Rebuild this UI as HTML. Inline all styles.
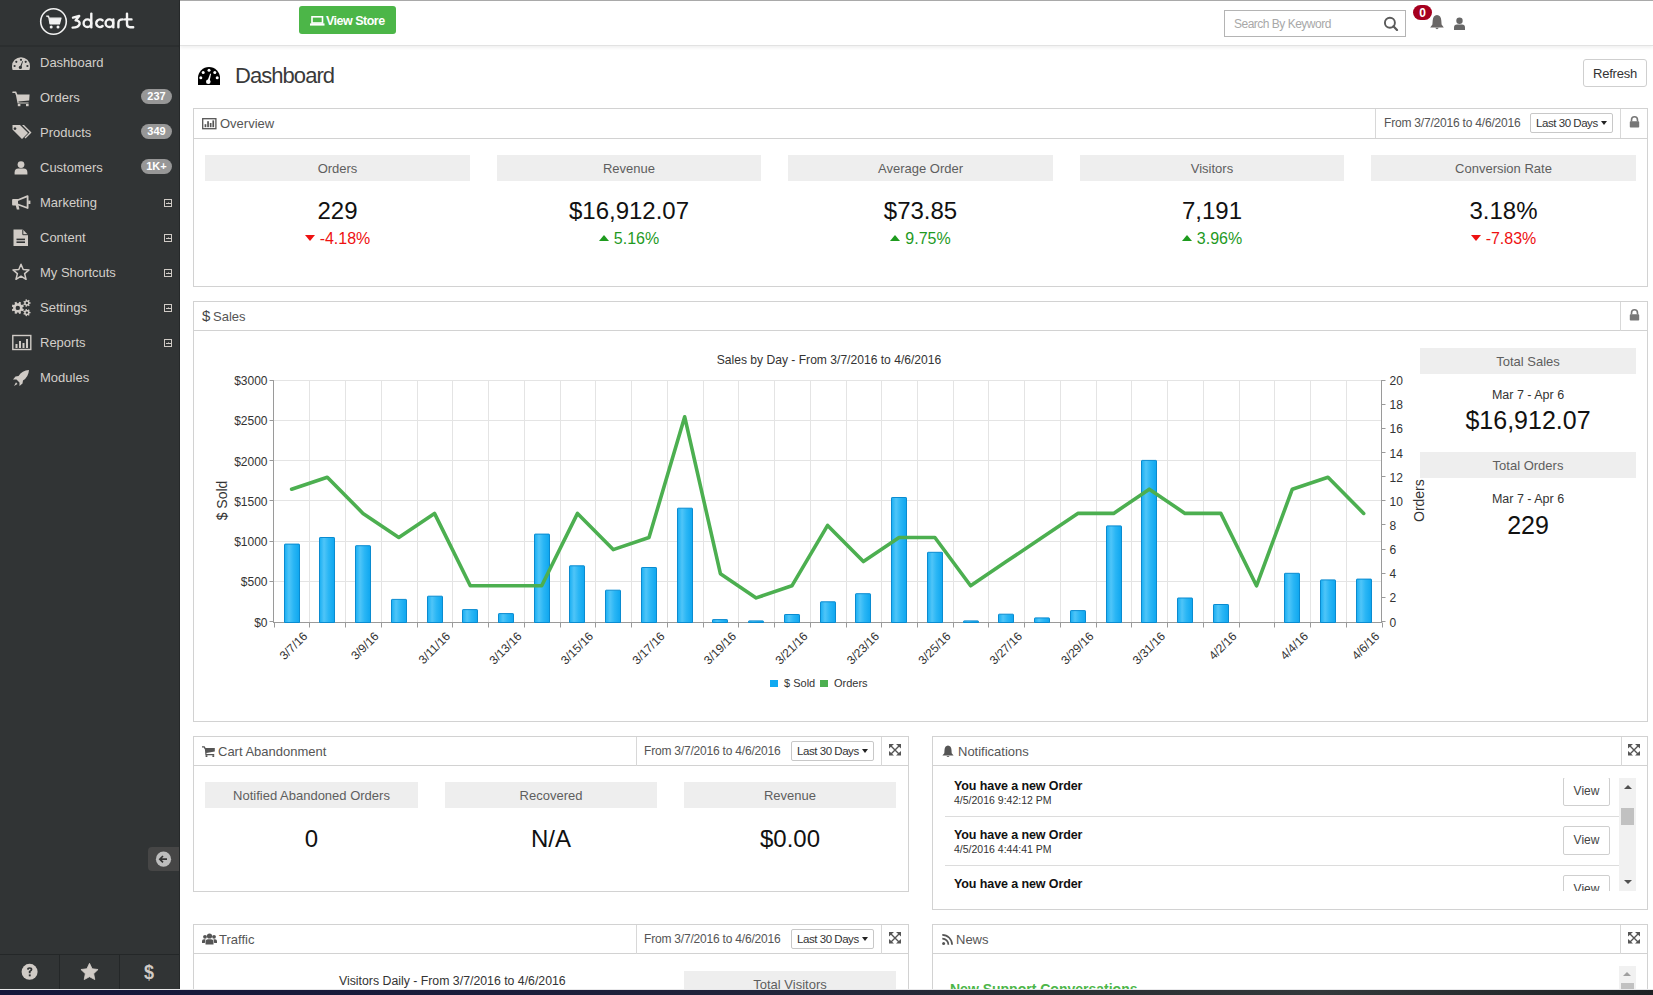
<!DOCTYPE html>
<html><head><meta charset="utf-8">
<style>
*{box-sizing:border-box;margin:0;padding:0}
html,body{width:1653px;height:995px;overflow:hidden;background:#fff;font-family:"Liberation Sans",sans-serif;}
#root{position:relative;width:1653px;height:995px;overflow:hidden;background:#fff}
.a{position:absolute;white-space:nowrap}
#sb{position:absolute;left:0;top:0;width:180px;height:989px;background:#313435;border-right:1px solid #26292a}
.mi{position:absolute;left:40px;font-size:13px;color:#d3cfca;line-height:16px}
.ic{position:absolute;left:12px;width:20px;height:18px}
.badge{position:absolute;left:141px;width:31px;height:15px;border-radius:8px;background:#979797;color:#fff;font-weight:bold;font-size:11px;line-height:15px;text-align:center}
.plus{position:absolute;left:164px;width:8px;height:8px;border:1px solid #cfcac5}
.plus:after{content:"";position:absolute;left:1px;top:2.5px;width:5px;height:1px;background:#cfcac5}
.plus:before{content:"";position:absolute;left:2.5px;top:2px;width:1px;height:2px;background:#8a8784}
#hdr{position:absolute;left:180px;top:1px;width:1473px;height:45px;background:#fff;border-bottom:1px solid #e2e2e2;box-shadow:0 2px 3px rgba(0,0,0,0.06)}
.panel{position:absolute;border:1px solid #d2d2d2;background:#fff}
.ph{position:absolute;left:0;top:0;right:0;height:29px;border-bottom:1px solid #d2d2d2}
.pt{position:absolute;font-size:13px;color:#555;line-height:16px}
.bx{position:absolute;background:#eeeeee;height:26px;font-size:13px;color:#5e5e5e;text-align:center;line-height:28px}
.val{position:absolute;text-align:center;font-size:24px;color:#111;line-height:28px}
.chg{position:absolute;text-align:center;font-size:16px;line-height:20px}
.red{color:#ee1111}.grn{color:#1f9a1f}
.dd{position:absolute;border:1px solid #c8c8c8;border-radius:2px;font-size:11.5px;color:#333;line-height:18px;padding-left:5px;letter-spacing:-0.45px}
.dd:after{content:"";position:absolute;right:5px;top:7px;border-left:3px solid transparent;border-right:3px solid transparent;border-top:4px solid #222;}
.sep{position:absolute;top:0;width:1px;height:29px;background:#d8d8d8}
.tri{display:inline-block;width:0;height:0;border-left:5.5px solid transparent;border-right:5.5px solid transparent;vertical-align:middle;margin-right:5px;position:relative;top:-2px}
.tri.dn{border-top:6px solid #ee1111}.tri.up{border-bottom:6px solid #1e9b1e}
.nt{position:absolute;left:21px;font-size:12.5px;font-weight:bold;color:#111;line-height:17px;letter-spacing:-0.1px}
.nd{position:absolute;left:21px;font-size:10.5px;color:#333;line-height:15px}
.vb{position:absolute;left:630px;width:47px;height:29px;border:1px solid #cfcfcf;border-radius:2px;font-size:12px;color:#444;line-height:27px;text-align:center}
.rng{position:absolute;font-size:12px;color:#555;line-height:16px;letter-spacing:-0.2px}
</style></head><body><div id="root">
<!-- top gray line -->
<div class="a" style="left:0;top:0;width:1653px;height:1px;background:#a9a9a9"></div>
<!-- sidebar -->
<div id="sb">

 <div class="a" style="left:0;top:45px;width:179px;height:2px;background:#2b2e2f"></div>
 <!-- logo -->
 <svg class="a" style="left:39px;top:7px" width="30" height="30" viewBox="0 0 30 30">
  <circle cx="14.5" cy="14.5" r="12.8" fill="none" stroke="#f2f2f2" stroke-width="1.6"/>
  <path d="M7.2 9.2 L9.6 9.2 L11 17 L20.4 17 L22 11.2 L10.2 11.2" fill="#f2f2f2" stroke="#f2f2f2" stroke-width="1.2" stroke-linejoin="round"/>
  <circle cx="12.2" cy="20" r="1.5" fill="#f2f2f2"/><circle cx="19" cy="20" r="1.5" fill="#f2f2f2"/>
 </svg>
 <svg class="a" style="left:0;top:0" width="180" height="44" viewBox="0 0 180 44"><g fill="none" stroke="#f4f4f4" stroke-width="2.4" stroke-linecap="round" stroke-linejoin="round">
  <path d="M73 17.6 L79.2 16 L75.6 20.4 Q80.2 21 79.6 24.2 Q78.6 27.6 72.6 27.6"/>
  <circle cx="87.4" cy="23.2" r="3.8"/><path d="M91.3 13.6 L91.3 27.2"/>
  <path d="M102.6 20.4 A3.8 3.8 0 1 0 102.6 26"/>
  <circle cx="109.4" cy="23.2" r="3.8"/><path d="M113.3 19.4 L113.3 27.2"/>
  <path d="M118.4 27.2 L118.4 23 Q118.4 19.4 122.8 19.4"/>
  <path d="M127 13.6 L127 24 Q127 27.2 130 27.2 L133.2 27.2 M125 19.4 L131.5 19.4"/>
 </g></svg>
 <!-- menu -->
 <svg class="ic" style="top:55px;left:11px" viewBox="0 0 20 18"><path d="M10 2.2 A9 9 0 0 0 1 11.2 Q1 13.4 1.6 15 L18.4 15 Q19 13.4 19 11.2 A9 9 0 0 0 10 2.2 Z" fill="#d0cbc6"/><g fill="#303334"><circle cx="10" cy="4.8" r="1.1"/><circle cx="5.3" cy="6.8" r="1.1"/><circle cx="14.7" cy="6.8" r="1.1"/><circle cx="3.6" cy="11" r="1.1"/><circle cx="16.4" cy="11" r="1.1"/><circle cx="9.4" cy="12.4" r="1.6"/><path d="M8.8 12.2 L11.4 6 L12 6.2 L10.2 12.6 Z"/></g></svg>
 <div class="mi" style="top:55px">Dashboard</div>
 <svg class="ic" style="top:91px" viewBox="0 0 20 18"><path d="M1 1.3 L3.6 1.3 L4.6 3.6" fill="none" stroke="#d0cbc6" stroke-width="1.6" stroke-linecap="round"/><path d="M3.8 3.4 L17.6 3.4 L17.2 9.6 L6.4 10.6 L6.6 11.6 L16.6 11.6 L16.6 12.6 L5.6 12.6 Z" fill="#d0cbc6"/><rect x="5.8" y="13" width="2.6" height="2.2" fill="#d0cbc6"/><rect x="14" y="13" width="2.6" height="2.2" fill="#d0cbc6"/></svg>
 <div class="mi" style="top:90px">Orders</div>
 <div class="badge" style="top:89px">237</div>
 <svg class="ic" style="top:124px" viewBox="0 0 20 18"><path d="M0.5 1 L8 1 L16 9 L10 15 L0.5 5.5 Z M3 3.2 A1.4 1.4 0 1 0 3.01 3.2 Z" fill="#d0cbc6" fill-rule="evenodd"/><path d="M10 1 L12 1 L19.5 8.5 L13.5 14.5 L12.5 13.5 L17.5 8.5 Z" fill="#d0cbc6"/></svg>
 <div class="mi" style="top:125px">Products</div>
 <div class="badge" style="top:124px">349</div>
 <svg class="ic" style="top:159px" viewBox="0 0 20 18"><circle cx="9" cy="5.6" r="3.4" fill="#d0cbc6"/><path d="M2.6 15.6 L2.6 13.6 Q2.6 9.8 6.4 9.6 L11.6 9.6 Q15.4 9.8 15.4 13.6 L15.4 15.6 Z" fill="#d0cbc6"/></svg>
 <div class="mi" style="top:160px">Customers</div>
 <div class="badge" style="top:159px">1K+</div>
 <svg class="ic" style="top:194px" viewBox="0 0 20 18"><path d="M1 6 L6 6 L15.6 2.2 L15.6 14 L6 10.5 L1 10.5 Z" fill="none" stroke="#d0cbc6" stroke-width="1.8" stroke-linejoin="round"/><path d="M1 6 L6 6 L6 10.5 L1 10.5 Z" fill="#d0cbc6"/><path d="M3.6 10.5 L6.4 10.5 L7.4 15.6 L4.8 15.6 Z" fill="#d0cbc6"/><rect x="16.2" y="6.6" width="2.2" height="3.4" fill="#d0cbc6"/></svg>
 <div class="mi" style="top:195px">Marketing</div>
 <div class="plus" style="top:199px"></div>
 <svg class="ic" style="top:229px" viewBox="0 0 20 18"><path d="M1.5 0.5 L10.8 0.5 L16 5.7 L16 17 L1.5 17 Z" fill="#d0cbc6"/><path d="M10.8 0.5 L10.8 5.7 L16 5.7" fill="none" stroke="#303334" stroke-width="1"/><rect x="4.5" y="9.6" width="8.5" height="1.6" fill="#303334"/><rect x="4.5" y="12.4" width="8.5" height="1.6" fill="#303334"/></svg>
 <div class="mi" style="top:230px">Content</div>
 <div class="plus" style="top:234px"></div>
 <svg class="ic" style="top:263px" viewBox="0 0 20 18"><path d="M9 1.2 L11.2 6.5 L17 6.9 L12.6 10.6 L14 16.3 L9 13.2 L4 16.3 L5.4 10.6 L1 6.9 L6.8 6.5 Z" fill="none" stroke="#d0cbc6" stroke-width="1.5" stroke-linejoin="round"/></svg>
 <div class="mi" style="top:265px">My Shortcuts</div>
 <div class="plus" style="top:269px"></div>
 <svg class="ic" style="top:299px" viewBox="0 0 20 18"><path d="M10.45 9.60 L11.94 10.32 L11.15 12.23 L9.58 11.69 L8.59 12.68 L9.13 14.25 L7.22 15.04 L6.50 13.55 L5.10 13.55 L4.38 15.04 L2.47 14.25 L3.01 12.68 L2.02 11.69 L0.45 12.23 L-0.34 10.32 L1.15 9.60 L1.15 8.20 L-0.34 7.48 L0.45 5.57 L2.02 6.11 L3.01 5.12 L2.47 3.55 L4.38 2.76 L5.10 4.25 L6.50 4.25 L7.22 2.76 L9.13 3.55 L8.59 5.12 L9.58 6.11 L11.15 5.57 L11.94 7.48 L10.45 8.20 Z M8.00 8.90 A2.2 2.2 0 1 0 3.60 8.90 A2.2 2.2 0 1 0 8.00 8.90 Z M17.50 3.26 L18.53 3.31 L18.53 4.69 L17.50 4.74 L17.10 5.57 L17.71 6.41 L16.62 7.27 L15.94 6.49 L15.05 6.70 L14.77 7.70 L13.42 7.39 L13.60 6.37 L12.88 5.79 L11.93 6.20 L11.32 4.95 L12.24 4.46 L12.24 3.54 L11.32 3.05 L11.93 1.80 L12.88 2.21 L13.60 1.63 L13.42 0.61 L14.77 0.30 L15.05 1.30 L15.94 1.51 L16.62 0.73 L17.71 1.59 L17.10 2.43 Z M16.10 4.00 A1.2 1.2 0 1 0 13.70 4.00 A1.2 1.2 0 1 0 16.10 4.00 Z M17.50 12.86 L18.53 12.91 L18.53 14.29 L17.50 14.34 L17.10 15.17 L17.71 16.01 L16.62 16.87 L15.94 16.09 L15.05 16.30 L14.77 17.30 L13.42 16.99 L13.60 15.97 L12.88 15.39 L11.93 15.80 L11.32 14.55 L12.24 14.06 L12.24 13.14 L11.32 12.65 L11.93 11.40 L12.88 11.81 L13.60 11.23 L13.42 10.21 L14.77 9.90 L15.05 10.90 L15.94 11.11 L16.62 10.33 L17.71 11.19 L17.10 12.03 Z M16.10 13.60 A1.2 1.2 0 1 0 13.70 13.60 A1.2 1.2 0 1 0 16.10 13.60 Z" fill="#d0cbc6" fill-rule="evenodd"/></svg>
 <div class="mi" style="top:300px">Settings</div>
 <div class="plus" style="top:304px"></div>
 <svg class="ic" style="top:334px" viewBox="0 0 20 18"><rect x="0.8" y="1.5" width="18" height="14" fill="none" stroke="#d0cbc6" stroke-width="1.4"/><rect x="3.5" y="10" width="2" height="4" fill="#d0cbc6"/><rect x="7" y="7" width="2" height="7" fill="#d0cbc6"/><rect x="10.5" y="9" width="2" height="5" fill="#d0cbc6"/><rect x="14" y="5" width="2" height="9" fill="#d0cbc6"/></svg>
 <div class="mi" style="top:335px">Reports</div>
 <div class="plus" style="top:339px"></div>
 <svg class="ic" style="top:369px" viewBox="0 0 20 18"><path d="M17 1 Q10 1.5 6.5 7 L3.5 7.5 L1 10.5 L4.5 10.5 L7.5 13.5 L7.5 17 L10.5 14.5 L11 11.5 Q16.5 8 17 1 Z" fill="#d0cbc6"/><path d="M4 13.2 L2 17 L5.5 15" fill="#d0cbc6"/></svg>
 <div class="mi" style="top:370px">Modules</div>
 <!-- collapse -->
 <div class="a" style="left:148px;top:847px;width:31px;height:24px;background:#464646;border-radius:4px 0 0 4px"></div>
 <svg class="a" style="left:155px;top:851px" width="17" height="17" viewBox="0 0 17 17"><circle cx="8.5" cy="8.2" r="7.6" fill="#bdbdbd"/><path d="M12 8.2 L5 8.2 M8 5 L4.8 8.2 L8 11.4" fill="none" stroke="#333" stroke-width="1.7"/></svg>
 <!-- bottom bar -->
 <div class="a" style="left:0;top:954px;width:179px;height:1px;background:#242728"></div>
 <div class="a" style="left:59px;top:955px;width:1px;height:34px;background:#242728"></div>
 <div class="a" style="left:119px;top:955px;width:1px;height:34px;background:#242728"></div>
 <svg class="a" style="left:21px;top:963px" width="18" height="18" viewBox="0 0 18 18"><circle cx="8.6" cy="8.8" r="8" fill="#d0cbc6"/><path d="M6 6.6 Q6 4.2 8.7 4.2 Q11.4 4.2 11.4 6.5 Q11.4 8 9.6 8.8 L9.6 10.3 L7.8 10.3 L7.8 8 Q9.6 7.4 9.6 6.6 Q9.6 5.8 8.7 5.8 Q7.8 5.8 7.8 6.8 Z" fill="#303334"/><rect x="7.8" y="11.4" width="1.9" height="1.9" fill="#303334"/></svg>
 <svg class="a" style="left:80px;top:963px" width="19" height="18" viewBox="0 0 19 18"><path d="M9.50 0.30 L12.09 5.74 L18.06 6.52 L13.68 10.66 L14.79 16.58 L9.50 13.70 L4.21 16.58 L5.32 10.66 L0.94 6.52 L6.91 5.74 Z" fill="#d0cbc6" stroke="#d0cbc6" stroke-width="0.8" stroke-linejoin="round"/></svg>
 <div class="a" style="left:144px;top:961px;font-size:20px;font-weight:bold;color:#d0cbc6;line-height:22px;transform:scaleX(0.9);transform-origin:left">$</div>
</div>
<div id="hdr"></div>
<!-- view store -->
<div class="a" style="left:299px;top:6px;width:97px;height:28px;background:#4cb648;border-radius:3px"></div>
<svg class="a" style="left:310px;top:16px" width="15" height="10" viewBox="0 0 15 10"><rect x="2" y="0.8" width="10.5" height="6.2" fill="none" stroke="#fff" stroke-width="1.6"/><rect x="0" y="7.4" width="14.5" height="2.2" fill="#fff"/></svg>
<div class="a" style="left:326px;top:13px;font-size:12.5px;font-weight:bold;color:#fff;line-height:16px;letter-spacing:-0.5px">View Store</div>
<!-- search -->
<div class="a" style="left:1224px;top:10px;width:182px;height:27px;border:1px solid #b4b4b4;background:#fff"></div>
<div class="a" style="left:1234px;top:17px;font-size:12px;color:#a8a8a8;line-height:15px;letter-spacing:-0.5px">Search By Keyword</div>
<svg class="a" style="left:1383px;top:16px" width="16" height="15" viewBox="0 0 16 15"><circle cx="6.9" cy="6.7" r="5" fill="none" stroke="#5a5a5a" stroke-width="1.9"/><path d="M10.4 10.3 L14 14" stroke="#5a5a5a" stroke-width="2.2" stroke-linecap="round"/></svg>
<div class="a" style="left:1413px;top:5px;width:19px;height:15px;border-radius:8px;background:#a6001f;color:#fff;font-weight:bold;font-size:12px;line-height:16px;text-align:center">0</div>
<svg class="a" style="left:1429px;top:14px" width="16" height="17" viewBox="0 0 16 17"><path d="M8 1 Q12 1.4 12.3 6.5 L12.6 10.6 L14.8 13.4 L1.2 13.4 L3.4 10.6 L3.7 6.5 Q4 1.4 8 1 Z" fill="#6a6766"/><path d="M6.2 13.8 Q8 16.6 9.8 13.8 Z" fill="#6a6766"/></svg>
<svg class="a" style="left:1453px;top:17px" width="13" height="14" viewBox="0 0 13 14"><circle cx="6.5" cy="3.8" r="3.2" fill="#666"/><path d="M1 13 L1 10.5 Q1 7.6 4 7.5 L9 7.5 Q12 7.6 12 10.5 L12 13 Z" fill="#666"/></svg>
<!-- title -->
<svg class="a" style="left:197px;top:66px" width="24" height="20" viewBox="0 0 24 20"><path d="M12 1 A11 11 0 0 0 1 12 L1 19 L23 19 L23 12 A11 11 0 0 0 12 1 Z" fill="#000"/><g fill="#fff"><circle cx="12" cy="4.2" r="1.5"/><circle cx="6.2" cy="6.6" r="1.5"/><circle cx="17.8" cy="6.6" r="1.5"/><circle cx="3.8" cy="11.8" r="1.5"/><circle cx="20.2" cy="11.8" r="1.5"/><circle cx="11.3" cy="15.8" r="2.3"/><path d="M10.2 15.6 L13.2 7.6 L14 7.9 L12.4 16.2 Z"/></g></svg>
<div class="a" style="left:235px;top:63px;font-size:22px;color:#3a3a3a;line-height:26px;letter-spacing:-0.95px">Dashboard</div>
<!-- refresh -->
<div class="a" style="left:1583px;top:59px;width:64px;height:28px;border:1px solid #cfcfcf;border-radius:3px;font-size:13px;color:#333;line-height:28px;text-align:center;letter-spacing:-0.2px">Refresh</div>
<!-- overview -->
<div class="panel" style="left:193px;top:108px;width:1455px;height:179px">
 <div class="ph" style="height:30px"></div>
 <div class="sep" style="left:1181px"></div>
 <div class="sep" style="left:1426px"></div>
</div>
<svg class="a" style="left:202px;top:118px" width="15" height="12" viewBox="0 0 15 12"><rect x="0.7" y="0.7" width="13.2" height="10" fill="none" stroke="#555" stroke-width="1.3"/><rect x="2.6" y="6.2" width="1.7" height="3" fill="#555"/><rect x="5.2" y="3.2" width="1.7" height="6" fill="#555"/><rect x="7.8" y="5" width="1.7" height="4.2" fill="#555"/><rect x="10.4" y="2.4" width="1.7" height="6.8" fill="#555"/></svg>
<div class="pt" style="left:220px;top:116px">Overview</div>
<div class="rng" style="left:1384px;top:115px">From 3/7/2016 to 4/6/2016</div>
<div class="dd" style="left:1530px;top:113px;width:83px;height:20px">Last 30 Days</div>
<svg class="a" style="left:1629px;top:116px" width="11" height="12" viewBox="0 0 11 12"><path d="M2.5 5.5 L2.5 4 Q2.5 0.8 5.5 0.8 Q8.5 0.8 8.5 4 L8.5 5.5" fill="none" stroke="#777" stroke-width="1.6"/><rect x="0.8" y="5.3" width="9.4" height="6.2" rx="0.8" fill="#777"/></svg>
<div class="bx" style="left:205px;top:155px;width:265px">Orders</div>
<div class="bx" style="left:497px;top:155px;width:264px">Revenue</div>
<div class="bx" style="left:788px;top:155px;width:265px">Average Order</div>
<div class="bx" style="left:1080px;top:155px;width:264px">Visitors</div>
<div class="bx" style="left:1371px;top:155px;width:265px">Conversion Rate</div>
<div class="val" style="left:205px;top:197px;width:265px">229</div>
<div class="val" style="left:497px;top:197px;width:264px">$16,912.07</div>
<div class="val" style="left:788px;top:197px;width:265px">$73.85</div>
<div class="val" style="left:1080px;top:197px;width:264px">7,191</div>
<div class="val" style="left:1371px;top:197px;width:265px">3.18%</div>
<div class="chg red" style="left:205px;top:229px;width:265px"><span class="tri dn"></span>-4.18%</div>
<div class="chg grn" style="left:497px;top:229px;width:264px"><span class="tri up"></span>5.16%</div>
<div class="chg grn" style="left:788px;top:229px;width:265px"><span class="tri up"></span>9.75%</div>
<div class="chg grn" style="left:1080px;top:229px;width:264px"><span class="tri up"></span>3.96%</div>
<div class="chg red" style="left:1371px;top:229px;width:265px"><span class="tri dn"></span>-7.83%</div>
<!-- sales panel -->
<div class="panel" style="left:193px;top:301px;width:1455px;height:421px">
 <div class="ph"></div>
 <div class="sep" style="left:1426px"></div>
</div>
<div class="a" style="left:202px;top:307px;font-size:15px;color:#444;line-height:18px">$</div>
<div class="pt" style="left:213px;top:309px">Sales</div>
<svg class="a" style="left:1629px;top:309px" width="11" height="12" viewBox="0 0 11 12"><path d="M2.5 5.5 L2.5 4 Q2.5 0.8 5.5 0.8 Q8.5 0.8 8.5 4 L8.5 5.5" fill="none" stroke="#777" stroke-width="1.6"/><rect x="0.8" y="5.3" width="9.4" height="6.2" rx="0.8" fill="#777"/></svg>
<!--CHART-->
<svg class="a" style="left:194px;top:331px" width="1453" height="390" viewBox="194 331 1453 390" font-family="Liberation Sans, sans-serif">
<defs><linearGradient id="bg" x1="0" x2="1" y1="0" y2="0"><stop offset="0" stop-color="#17aef3"/><stop offset="0.3" stop-color="#4fc5f8"/><stop offset="0.6" stop-color="#2ab6f5"/><stop offset="1" stop-color="#0ea6ef"/></linearGradient></defs>
<path d="M273.7 581.5H1381.6 M273.7 541.5H1381.6 M273.7 500.5H1381.6 M273.7 460.5H1381.6 M273.7 420.5H1381.6 M273.7 380.5H1381.6 M309.5 380.1V622.0 M345.5 380.1V622.0 M381.5 380.1V622.0 M417.5 380.1V622.0 M452.5 380.1V622.0 M488.5 380.1V622.0 M524.5 380.1V622.0 M560.5 380.1V622.0 M595.5 380.1V622.0 M631.5 380.1V622.0 M667.5 380.1V622.0 M703.5 380.1V622.0 M738.5 380.1V622.0 M774.5 380.1V622.0 M810.5 380.1V622.0 M846.5 380.1V622.0 M881.5 380.1V622.0 M917.5 380.1V622.0 M953.5 380.1V622.0 M988.5 380.1V622.0 M1024.5 380.1V622.0 M1060.5 380.1V622.0 M1096.5 380.1V622.0 M1131.5 380.1V622.0 M1167.5 380.1V622.0 M1203.5 380.1V622.0 M1239.5 380.1V622.0 M1274.5 380.1V622.0 M1310.5 380.1V622.0 M1346.5 380.1V622.0" stroke="#e4e4e4" stroke-width="1" fill="none"/>
<path d="M273.5 380.1V622.5 M1381.5 380.1V622.5 M273.0 622.5H1382.0 M269.5 621.5H273.5 M269.5 581.5H273.5 M269.5 541.5H273.5 M269.5 500.5H273.5 M269.5 460.5H273.5 M269.5 420.5H273.5 M269.5 380.5H273.5 M1381.5 621.5H1385.5 M1381.5 597.5H1385.5 M1381.5 573.5H1385.5 M1381.5 549.5H1385.5 M1381.5 524.5H1385.5 M1381.5 500.5H1385.5 M1381.5 476.5H1385.5 M1381.5 452.5H1385.5 M1381.5 428.5H1385.5 M1381.5 404.5H1385.5 M1381.5 380.5H1385.5 M274.5 622.5V627.5 M309.5 622.5V627.5 M345.5 622.5V627.5 M381.5 622.5V627.5 M417.5 622.5V627.5 M452.5 622.5V627.5 M488.5 622.5V627.5 M524.5 622.5V627.5 M560.5 622.5V627.5 M595.5 622.5V627.5 M631.5 622.5V627.5 M667.5 622.5V627.5 M703.5 622.5V627.5 M738.5 622.5V627.5 M774.5 622.5V627.5 M810.5 622.5V627.5 M846.5 622.5V627.5 M881.5 622.5V627.5 M917.5 622.5V627.5 M953.5 622.5V627.5 M988.5 622.5V627.5 M1024.5 622.5V627.5 M1060.5 622.5V627.5 M1096.5 622.5V627.5 M1131.5 622.5V627.5 M1167.5 622.5V627.5 M1203.5 622.5V627.5 M1239.5 622.5V627.5 M1274.5 622.5V627.5 M1310.5 622.5V627.5 M1346.5 622.5V627.5 M1382.5 622.5V627.5" stroke="#9a9a9a" stroke-width="1" fill="none"/>
<path d="M284.5 622.5V544.7Q284.5 544.1 285.1 544.1H298.9Q299.5 544.1 299.5 544.7V622.5Z" fill="url(#bg)" stroke="#0a8bd0" stroke-width="1"/>
<path d="M319.5 622.5V538.1Q319.5 537.5 320.1 537.5H333.9Q334.5 537.5 334.5 538.1V622.5Z" fill="url(#bg)" stroke="#0a8bd0" stroke-width="1"/>
<path d="M355.5 622.5V546.3Q355.5 545.7 356.1 545.7H369.9Q370.5 545.7 370.5 546.3V622.5Z" fill="url(#bg)" stroke="#0a8bd0" stroke-width="1"/>
<path d="M391.5 622.5V600.0Q391.5 599.4 392.1 599.4H405.9Q406.5 599.4 406.5 600.0V622.5Z" fill="url(#bg)" stroke="#0a8bd0" stroke-width="1"/>
<path d="M427.5 622.5V596.8Q427.5 596.2 428.1 596.2H441.9Q442.5 596.2 442.5 596.8V622.5Z" fill="url(#bg)" stroke="#0a8bd0" stroke-width="1"/>
<path d="M462.5 622.5V610.2Q462.5 609.6 463.1 609.6H476.9Q477.5 609.6 477.5 610.2V622.5Z" fill="url(#bg)" stroke="#0a8bd0" stroke-width="1"/>
<path d="M498.5 622.5V614.2Q498.5 613.6 499.1 613.6H512.9Q513.5 613.6 513.5 614.2V622.5Z" fill="url(#bg)" stroke="#0a8bd0" stroke-width="1"/>
<path d="M534.5 622.5V534.7Q534.5 534.1 535.1 534.1H548.9Q549.5 534.1 549.5 534.7V622.5Z" fill="url(#bg)" stroke="#0a8bd0" stroke-width="1"/>
<path d="M569.5 622.5V566.4Q569.5 565.8 570.1 565.8H583.9Q584.5 565.8 584.5 566.4V622.5Z" fill="url(#bg)" stroke="#0a8bd0" stroke-width="1"/>
<path d="M605.5 622.5V590.8Q605.5 590.2 606.1 590.2H619.9Q620.5 590.2 620.5 590.8V622.5Z" fill="url(#bg)" stroke="#0a8bd0" stroke-width="1"/>
<path d="M641.5 622.5V568.1Q641.5 567.5 642.1 567.5H655.9Q656.5 567.5 656.5 568.1V622.5Z" fill="url(#bg)" stroke="#0a8bd0" stroke-width="1"/>
<path d="M677.5 622.5V508.8Q677.5 508.2 678.1 508.2H691.9Q692.5 508.2 692.5 508.8V622.5Z" fill="url(#bg)" stroke="#0a8bd0" stroke-width="1"/>
<path d="M712.5 622.5V620.2Q712.5 619.6 713.1 619.6H726.9Q727.5 619.6 727.5 620.2V622.5Z" fill="url(#bg)" stroke="#0a8bd0" stroke-width="1"/>
<path d="M748.5 622.5V621.5Q748.5 620.9 749.1 620.9H762.9Q763.5 620.9 763.5 621.5V622.5Z" fill="url(#bg)" stroke="#0a8bd0" stroke-width="1"/>
<path d="M784.5 622.5V615.1Q784.5 614.5 785.1 614.5H798.9Q799.5 614.5 799.5 615.1V622.5Z" fill="url(#bg)" stroke="#0a8bd0" stroke-width="1"/>
<path d="M820.5 622.5V602.4Q820.5 601.8 821.1 601.8H834.9Q835.5 601.8 835.5 602.4V622.5Z" fill="url(#bg)" stroke="#0a8bd0" stroke-width="1"/>
<path d="M855.5 622.5V594.3Q855.5 593.7 856.1 593.7H869.9Q870.5 593.7 870.5 594.3V622.5Z" fill="url(#bg)" stroke="#0a8bd0" stroke-width="1"/>
<path d="M891.5 622.5V498.1Q891.5 497.5 892.1 497.5H905.9Q906.5 497.5 906.5 498.1V622.5Z" fill="url(#bg)" stroke="#0a8bd0" stroke-width="1"/>
<path d="M927.5 622.5V552.9Q927.5 552.3 928.1 552.3H941.9Q942.5 552.3 942.5 552.9V622.5Z" fill="url(#bg)" stroke="#0a8bd0" stroke-width="1"/>
<path d="M963.5 622.5V621.5Q963.5 620.9 964.1 620.9H977.9Q978.5 620.9 978.5 621.5V622.5Z" fill="url(#bg)" stroke="#0a8bd0" stroke-width="1"/>
<path d="M998.5 622.5V614.8Q998.5 614.2 999.1 614.2H1012.9Q1013.5 614.2 1013.5 614.8V622.5Z" fill="url(#bg)" stroke="#0a8bd0" stroke-width="1"/>
<path d="M1034.5 622.5V618.5Q1034.5 617.9 1035.1 617.9H1048.9Q1049.5 617.9 1049.5 618.5V622.5Z" fill="url(#bg)" stroke="#0a8bd0" stroke-width="1"/>
<path d="M1070.5 622.5V611.2Q1070.5 610.6 1071.1 610.6H1084.9Q1085.5 610.6 1085.5 611.2V622.5Z" fill="url(#bg)" stroke="#0a8bd0" stroke-width="1"/>
<path d="M1106.5 622.5V526.5Q1106.5 525.9 1107.1 525.9H1120.9Q1121.5 525.9 1121.5 526.5V622.5Z" fill="url(#bg)" stroke="#0a8bd0" stroke-width="1"/>
<path d="M1141.5 622.5V461.0Q1141.5 460.4 1142.1 460.4H1155.9Q1156.5 460.4 1156.5 461.0V622.5Z" fill="url(#bg)" stroke="#0a8bd0" stroke-width="1"/>
<path d="M1177.5 622.5V598.6Q1177.5 598.0 1178.1 598.0H1191.9Q1192.5 598.0 1192.5 598.6V622.5Z" fill="url(#bg)" stroke="#0a8bd0" stroke-width="1"/>
<path d="M1213.5 622.5V605.1Q1213.5 604.5 1214.1 604.5H1227.9Q1228.5 604.5 1228.5 605.1V622.5Z" fill="url(#bg)" stroke="#0a8bd0" stroke-width="1"/>
<path d="M1284.5 622.5V573.9Q1284.5 573.3 1285.1 573.3H1298.9Q1299.5 573.3 1299.5 573.9V622.5Z" fill="url(#bg)" stroke="#0a8bd0" stroke-width="1"/>
<path d="M1320.5 622.5V580.5Q1320.5 579.9 1321.1 579.9H1334.9Q1335.5 579.9 1335.5 580.5V622.5Z" fill="url(#bg)" stroke="#0a8bd0" stroke-width="1"/>
<path d="M1356.5 622.5V579.7Q1356.5 579.1 1357.1 579.1H1370.9Q1371.5 579.1 1371.5 579.7V622.5Z" fill="url(#bg)" stroke="#0a8bd0" stroke-width="1"/>
<polyline points="291.6,489.2 327.3,477.2 363.0,513.4 398.8,537.5 434.5,513.4 470.3,585.8 506.0,585.8 541.7,585.8 577.5,513.4 613.2,549.6 649.0,537.5 684.7,416.8 720.4,573.7 756.2,597.9 791.9,585.8 827.6,525.4 863.4,561.6 899.1,537.5 934.9,537.5 970.6,585.8 1006.3,561.6 1042.1,537.5 1077.8,513.4 1113.6,513.4 1149.3,489.2 1185.0,513.4 1220.8,513.4 1256.5,585.8 1292.3,489.2 1328.0,477.2 1363.7,513.4" fill="none" stroke="#4caf50" stroke-width="3.6" stroke-linejoin="round" stroke-linecap="round"/>
<text x="267.5" y="626.5" text-anchor="end" font-size="12" fill="#333">$0</text>
<text x="267.5" y="586.3" text-anchor="end" font-size="12" fill="#333">$500</text>
<text x="267.5" y="546.0" text-anchor="end" font-size="12" fill="#333">$1000</text>
<text x="267.5" y="505.8" text-anchor="end" font-size="12" fill="#333">$1500</text>
<text x="267.5" y="465.6" text-anchor="end" font-size="12" fill="#333">$2000</text>
<text x="267.5" y="425.3" text-anchor="end" font-size="12" fill="#333">$2500</text>
<text x="267.5" y="385.1" text-anchor="end" font-size="12" fill="#333">$3000</text>
<text x="1389.5" y="626.5" font-size="12" fill="#333">0</text>
<text x="1389.5" y="602.4" font-size="12" fill="#333">2</text>
<text x="1389.5" y="578.2" font-size="12" fill="#333">4</text>
<text x="1389.5" y="554.1" font-size="12" fill="#333">6</text>
<text x="1389.5" y="529.9" font-size="12" fill="#333">8</text>
<text x="1389.5" y="505.8" font-size="12" fill="#333">10</text>
<text x="1389.5" y="481.7" font-size="12" fill="#333">12</text>
<text x="1389.5" y="457.5" font-size="12" fill="#333">14</text>
<text x="1389.5" y="433.4" font-size="12" fill="#333">16</text>
<text x="1389.5" y="409.2" font-size="12" fill="#333">18</text>
<text x="1389.5" y="385.1" font-size="12" fill="#333">20</text>
<text x="308.2" y="637.0" text-anchor="end" font-size="12" fill="#333" transform="rotate(-45 308.2 637.0)">3/7/16</text>
<text x="379.6" y="637.0" text-anchor="end" font-size="12" fill="#333" transform="rotate(-45 379.6 637.0)">3/9/16</text>
<text x="451.1" y="637.0" text-anchor="end" font-size="12" fill="#333" transform="rotate(-45 451.1 637.0)">3/11/16</text>
<text x="522.6" y="637.0" text-anchor="end" font-size="12" fill="#333" transform="rotate(-45 522.6 637.0)">3/13/16</text>
<text x="594.1" y="637.0" text-anchor="end" font-size="12" fill="#333" transform="rotate(-45 594.1 637.0)">3/15/16</text>
<text x="665.6" y="637.0" text-anchor="end" font-size="12" fill="#333" transform="rotate(-45 665.6 637.0)">3/17/16</text>
<text x="737.0" y="637.0" text-anchor="end" font-size="12" fill="#333" transform="rotate(-45 737.0 637.0)">3/19/16</text>
<text x="808.5" y="637.0" text-anchor="end" font-size="12" fill="#333" transform="rotate(-45 808.5 637.0)">3/21/16</text>
<text x="880.0" y="637.0" text-anchor="end" font-size="12" fill="#333" transform="rotate(-45 880.0 637.0)">3/23/16</text>
<text x="951.5" y="637.0" text-anchor="end" font-size="12" fill="#333" transform="rotate(-45 951.5 637.0)">3/25/16</text>
<text x="1022.9" y="637.0" text-anchor="end" font-size="12" fill="#333" transform="rotate(-45 1022.9 637.0)">3/27/16</text>
<text x="1094.4" y="637.0" text-anchor="end" font-size="12" fill="#333" transform="rotate(-45 1094.4 637.0)">3/29/16</text>
<text x="1165.9" y="637.0" text-anchor="end" font-size="12" fill="#333" transform="rotate(-45 1165.9 637.0)">3/31/16</text>
<text x="1237.4" y="637.0" text-anchor="end" font-size="12" fill="#333" transform="rotate(-45 1237.4 637.0)">4/2/16</text>
<text x="1308.9" y="637.0" text-anchor="end" font-size="12" fill="#333" transform="rotate(-45 1308.9 637.0)">4/4/16</text>
<text x="1380.3" y="637.0" text-anchor="end" font-size="12" fill="#333" transform="rotate(-45 1380.3 637.0)">4/6/16</text>
<text x="829" y="364.3" text-anchor="middle" font-size="12.1" fill="#333">Sales by Day - From 3/7/2016 to 4/6/2016</text>
<text x="227" y="500.5" text-anchor="middle" font-size="14" fill="#333" transform="rotate(-90 227 500.5)">$ Sold</text>
<text x="1424.5" y="500.6" text-anchor="middle" font-size="14" fill="#333" transform="rotate(-90 1424.5 500.6)">Orders</text>
<rect x="770" y="680" width="8" height="7" fill="#10a9f1"/><text x="784" y="687" font-size="11" fill="#333">$ Sold</text>
<rect x="820" y="680" width="8" height="7" fill="#4caf50"/><text x="834" y="687" font-size="11" fill="#333">Orders</text>
</svg>
<!--/CHART-->
<!-- sales right -->
<div class="bx" style="left:1420px;top:348px;width:216px">Total Sales</div>
<div class="a" style="left:1420px;top:388px;width:216px;text-align:center;font-size:12.5px;color:#333;line-height:15px">Mar 7 - Apr 6</div>
<div class="a" style="left:1420px;top:406px;width:216px;text-align:center;font-size:25px;color:#111;line-height:28px">$16,912.07</div>
<div class="bx" style="left:1420px;top:452px;width:216px">Total Orders</div>
<div class="a" style="left:1420px;top:492px;width:216px;text-align:center;font-size:12.5px;color:#333;line-height:15px">Mar 7 - Apr 6</div>
<div class="a" style="left:1420px;top:511px;width:216px;text-align:center;font-size:25px;color:#111;line-height:28px">229</div>
<!-- cart abandonment -->
<div class="panel" style="left:193px;top:736px;width:716px;height:156px">
 <div class="ph"></div>
 <div class="sep" style="left:442px"></div>
 <div class="sep" style="left:687px"></div>
</div>
<svg class="a" style="left:202px;top:746px" width="14" height="12" viewBox="0 0 14 12"><path d="M0.3 0.9 L2.2 0.9 L3.2 2.6" fill="none" stroke="#555" stroke-width="1.3" stroke-linecap="round"/><path d="M2.8 2 L12.8 2 L12.8 5.6 L4.4 7 L4.6 8 L12.2 8 L12.2 9.2 L3.4 9.2 Z" fill="#555"/><rect x="3.6" y="9.2" width="1.8" height="1.8" fill="#555"/><rect x="10.4" y="9.2" width="1.8" height="1.8" fill="#555"/></svg>
<div class="pt" style="left:218px;top:744px">Cart Abandonment</div>
<div class="rng" style="left:644px;top:743px">From 3/7/2016 to 4/6/2016</div>
<div class="dd" style="left:791px;top:741px;width:83px;height:20px">Last 30 Days</div>
<svg class="a expand" style="left:889px;top:744px" width="12" height="12" viewBox="0 0 12 12"><g stroke="#555" stroke-width="1.4" fill="none"><path d="M1.5 1.5 L10.5 10.5 M10.5 1.5 L1.5 10.5"/></g><g fill="#555"><path d="M0 0 L5 0 L0 4.6 Z M12 0 L7 0 L12 4.6 Z M0 11.6 L5 11.6 L0 7 Z M12 11.6 L7 11.6 L12 7 Z"/></g></svg>
<div class="bx" style="left:205px;top:782px;width:213px">Notified Abandoned Orders</div>
<div class="bx" style="left:445px;top:782px;width:212px">Recovered</div>
<div class="bx" style="left:684px;top:782px;width:212px">Revenue</div>
<div class="val" style="left:205px;top:825px;width:213px">0</div>
<div class="val" style="left:445px;top:825px;width:212px">N/A</div>
<div class="val" style="left:684px;top:825px;width:212px">$0.00</div>
<!-- notifications -->
<div class="panel" style="left:932px;top:736px;width:716px;height:174px">
 <div class="ph"></div>
 <div class="sep" style="left:688px"></div>
</div>
<svg class="a" style="left:942px;top:745px" width="12" height="13" viewBox="0 0 12 13"><path d="M6 0.5 Q9.3 0.8 9.5 5 L9.7 8.2 L11.6 10.6 L0.4 10.6 L2.3 8.2 L2.5 5 Q2.7 0.8 6 0.5 Z" fill="#555"/><path d="M4.5 11 Q6 13 7.5 11 Z" fill="#555"/></svg>
<div class="pt" style="left:958px;top:744px">Notifications</div>
<svg class="a expand" style="left:1628px;top:744px" width="12" height="12" viewBox="0 0 12 12"><g stroke="#555" stroke-width="1.4" fill="none"><path d="M1.5 1.5 L10.5 10.5 M10.5 1.5 L1.5 10.5"/></g><g fill="#555"><path d="M0 0 L5 0 L0 4.6 Z M12 0 L7 0 L12 4.6 Z M0 11.6 L5 11.6 L0 7 Z M12 11.6 L7 11.6 L12 7 Z"/></g></svg>
<div class="a" style="left:933px;top:778px;width:687px;height:113px;overflow:hidden">
 <div class="nt" style="top:0px">You have a new Order</div>
 <div class="nd" style="top:15px">4/5/2016 9:42:12 PM</div>
 <div class="vb" style="top:-1px">View</div>
 <div class="a" style="left:12px;top:38px;width:674px;height:1px;background:#dcdcdc"></div>
 <div class="nt" style="top:49px">You have a new Order</div>
 <div class="nd" style="top:64px">4/5/2016 4:44:41 PM</div>
 <div class="vb" style="top:48px">View</div>
 <div class="a" style="left:12px;top:87px;width:674px;height:1px;background:#dcdcdc"></div>
 <div class="nt" style="top:98px">You have a new Order</div>
 <div class="vb" style="top:97px">View</div>
</div>
<div class="a" style="left:1619px;top:778px;width:17px;height:113px;background:#f1f1f1"></div>
<div class="a" style="left:1621px;top:808px;width:13px;height:17px;background:#c1c1c1"></div>
<div class="a" style="left:1624px;top:785px;border-left:4px solid transparent;border-right:4px solid transparent;border-bottom:4px solid #505050"></div>
<div class="a" style="left:1624px;top:880px;border-left:4px solid transparent;border-right:4px solid transparent;border-top:4px solid #505050"></div>
<!-- traffic -->
<div class="panel" style="left:193px;top:924px;width:716px;height:80px">
 <div class="ph"></div>
 <div class="sep" style="left:442px"></div>
 <div class="sep" style="left:687px"></div>
</div>
<svg class="a" style="left:202px;top:933px" width="15" height="12" viewBox="0 0 15 12"><circle cx="7.5" cy="3" r="2.6" fill="#555"/><circle cx="3" cy="3.8" r="1.9" fill="#555"/><circle cx="12" cy="3.8" r="1.9" fill="#555"/><path d="M3.5 11.5 L3.5 9 Q3.5 6.3 6 6.3 L9 6.3 Q11.5 6.3 11.5 9 L11.5 11.5 Z" fill="#555"/><path d="M0 10 L0 8 Q0 6.2 2 6.2 L3.5 6.2 L2.8 10 Z M15 10 L15 8 Q15 6.2 13 6.2 L11.5 6.2 L12.2 10 Z" fill="#555"/></svg>
<div class="pt" style="left:219px;top:932px">Traffic</div>
<div class="rng" style="left:644px;top:931px">From 3/7/2016 to 4/6/2016</div>
<div class="dd" style="left:791px;top:929px;width:83px;height:20px">Last 30 Days</div>
<svg class="a expand" style="left:889px;top:932px" width="12" height="12" viewBox="0 0 12 12"><g stroke="#555" stroke-width="1.4" fill="none"><path d="M1.5 1.5 L10.5 10.5 M10.5 1.5 L1.5 10.5"/></g><g fill="#555"><path d="M0 0 L5 0 L0 4.6 Z M12 0 L7 0 L12 4.6 Z M0 11.6 L5 11.6 L0 7 Z M12 11.6 L7 11.6 L12 7 Z"/></g></svg>
<div class="a" style="left:339px;top:974px;font-size:12.3px;color:#333;line-height:15px">Visitors Daily - From 3/7/2016 to 4/6/2016</div>
<div class="bx" style="left:684px;top:971px;width:212px">Total Visitors</div>
<!-- news -->
<div class="panel" style="left:932px;top:924px;width:716px;height:80px">
 <div class="ph"></div>
 <div class="sep" style="left:687px"></div>
</div>
<svg class="a" style="left:942px;top:934px" width="11" height="11" viewBox="0 0 11 11"><circle cx="1.6" cy="9.4" r="1.5" fill="#555"/><path d="M0.3 4.6 A6 6 0 0 1 6.4 10.7" fill="none" stroke="#555" stroke-width="1.7"/><path d="M0.3 0.9 A9.8 9.8 0 0 1 10.1 10.7" fill="none" stroke="#555" stroke-width="1.7"/></svg>
<div class="pt" style="left:956px;top:932px">News</div>
<svg class="a expand" style="left:1628px;top:932px" width="12" height="12" viewBox="0 0 12 12"><g stroke="#555" stroke-width="1.4" fill="none"><path d="M1.5 1.5 L10.5 10.5 M10.5 1.5 L1.5 10.5"/></g><g fill="#555"><path d="M0 0 L5 0 L0 4.6 Z M12 0 L7 0 L12 4.6 Z M0 11.6 L5 11.6 L0 7 Z M12 11.6 L7 11.6 L12 7 Z"/></g></svg>
<div class="a" style="left:950px;top:980px;font-size:14px;font-weight:bold;color:#4cb648;line-height:18px">New Support Conversations</div>
<div class="a" style="left:1619px;top:966px;width:17px;height:30px;background:#f1f1f1"></div>
<div class="a" style="left:1623px;top:972px;border-left:4px solid transparent;border-right:4px solid transparent;border-bottom:4px solid #a0a0a0"></div>
<div class="a" style="left:1621px;top:983px;width:13px;height:10px;background:#c1c1c1"></div>
<!-- bottom dark strip -->
<div class="a" style="left:0;top:989px;width:1653px;height:1px;background:#e8e8ea"></div>
<div class="a" style="left:0;top:990px;width:1653px;height:5px;background:linear-gradient(90deg,#15173a 0%,#1a1c3a 30%,#23263a 50%,#2a2f33 65%,#33393b 80%,#1d2124 100%)"></div>
</div></body></html>
